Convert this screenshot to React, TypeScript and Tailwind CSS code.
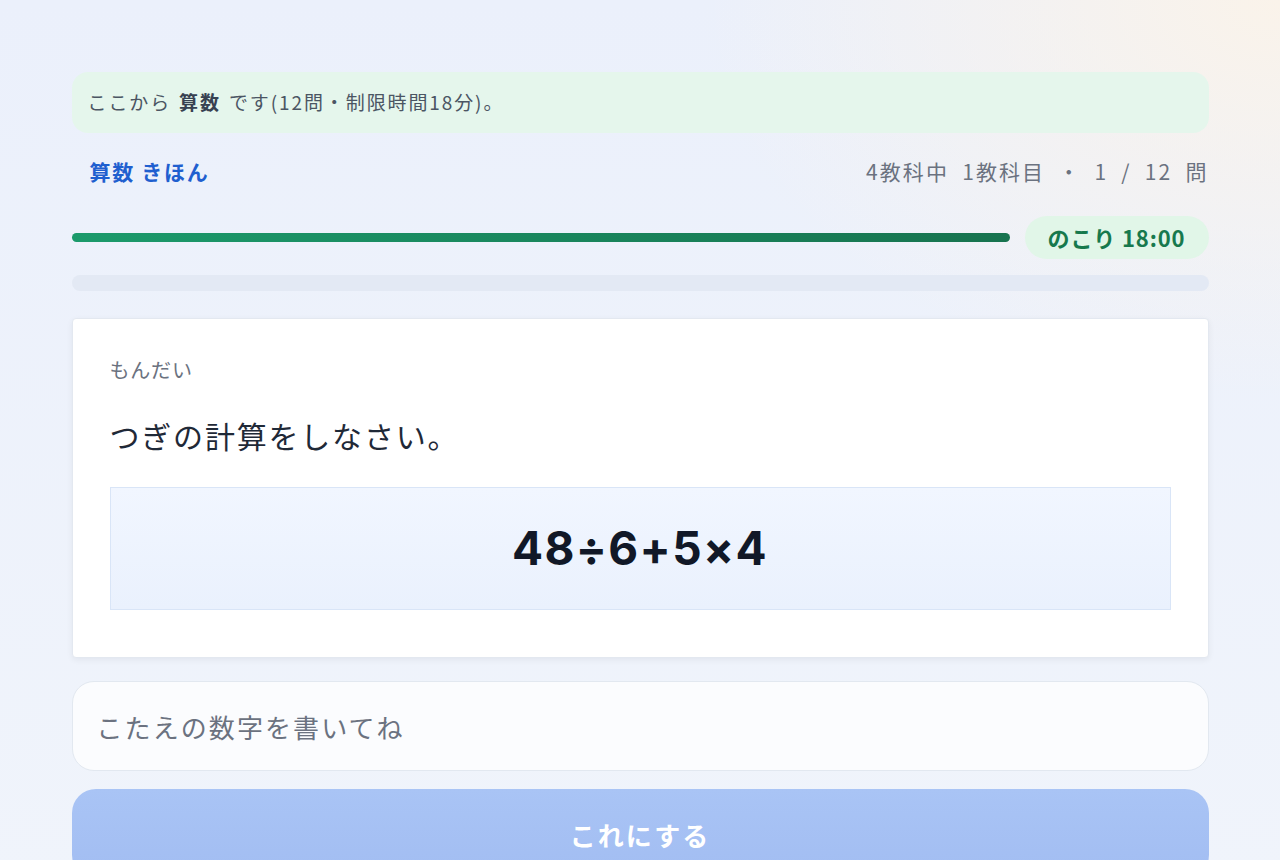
import { useState } from "react";

const font = {
  fontFamily: '"Noto Sans CJK JP", "Noto Sans", sans-serif',
};

export default function App() {
  const [answer, setAnswer] = useState("");

  return (
    <div
      className="min-h-[860px] w-full overflow-hidden bg-[radial-gradient(ellipse_at_100%_0%,#faf3ea_0%,rgba(250,243,234,0)_32%),linear-gradient(180deg,#ebf0fb_0%,#f0f4fb_100%)]"
      style={font}
    >
      <div className="mx-auto flex w-[1137px] flex-col pt-[72px]">
        <div className="flex h-[61px] items-center rounded-2xl bg-[#e5f6ec] px-4 text-[19px] tracking-[0.1em] text-[#4b5563]">
          ここから <span className="mx-[8px] font-bold text-[#374151]">算数</span> です(12問・制限時間18分)。
        </div>

        <div className="mt-[24px] flex h-[30px] items-center justify-between pl-[18px]">
          <span className="text-[21px] font-bold tracking-[0.08em] text-[#1f5fcf]">算数 きほん</span>
          <span className="text-[21px] tracking-[0.1em] text-[#6b7280] [word-spacing:0.3em]">
            4教科中 1教科目 ・ 1 / 12 問
          </span>
        </div>

        <div className="mt-[29px] flex h-[43px] items-center gap-[15px]">
          <div className="h-[9px] flex-1 rounded-full bg-[linear-gradient(90deg,#1b9a6b,#17734f)]" />
          <div className="flex h-[43px] w-[184px] items-center justify-center rounded-full bg-[#e1f6e8] text-[22px] font-semibold tracking-[0.04em] text-[#17794d]">
            のこり 18:00
          </div>
        </div>

        <div className="mt-[16px] h-[16px] rounded-full bg-[#e3e9f4]" />

        <div className="mt-[27px] rounded-[4px] border border-[#e3e8f0] bg-white px-[37px] pb-[47px] pt-[36px] shadow-[0_2px_6px_rgba(15,23,42,0.06)]">
          <div className="text-[20px] leading-[30px] tracking-[0.04em] text-[#6b7280]">もんだい</div>
          <div className="mt-[30px] text-[30px] leading-[40px] tracking-[0.06em] text-[#1f2937]">
            つぎの計算をしなさい。
          </div>
          <div className="mt-[32px] flex h-[123px] items-center justify-center border border-[#d9e5f7] bg-[linear-gradient(180deg,#f1f6ff,#eaf1fd)]">
            <span
              className="text-[46px] font-bold tracking-[0.03em] text-[#111827]"
              style={{ fontFamily: '"Inter", "Liberation Sans", sans-serif' }}
            >
              48÷6+5×4
            </span>
          </div>
        </div>

        <input
          value={answer}
          onChange={(e) => setAnswer(e.target.value)}
          placeholder="こたえの数字を書いてね"
          className="mt-[23px] h-[90px] w-full rounded-[22px] border border-[#e2e8f0] bg-[#fbfcfe] px-[24px] text-[26px] tracking-[0.08em] text-[#111827] outline-none placeholder:text-[#6b7280]"
          style={font}
        />

        <button
          disabled
          className="mt-[18px] h-[90px] w-full rounded-[24px] bg-[linear-gradient(180deg,#a9c4f5,#a2bdf2)] text-[26px] font-bold tracking-[0.08em] text-white"
          style={font}
        >
          これにする
        </button>
      </div>
    </div>
  );
}
